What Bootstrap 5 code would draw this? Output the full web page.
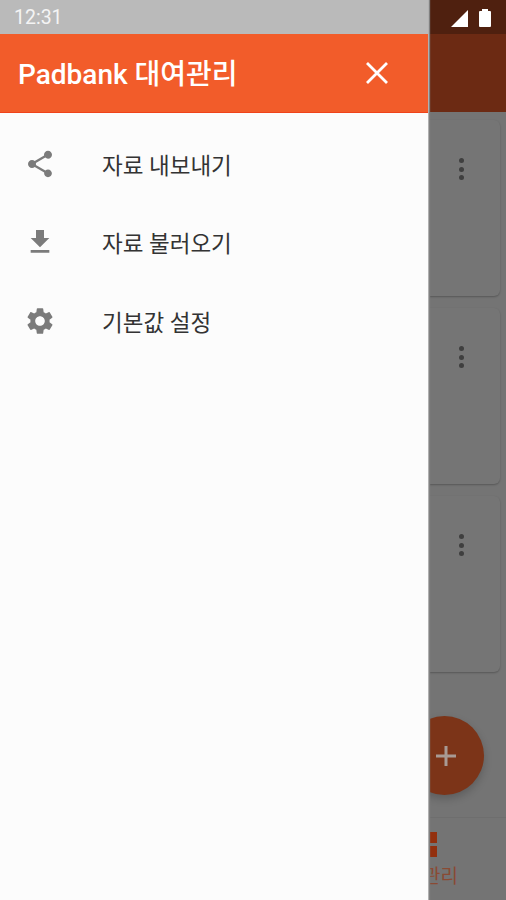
<!DOCTYPE html>
<html lang="ko">
<head>
    <meta charset="UTF-8">
    <meta name="viewport" content="width=device-width, initial-scale=1.0">
    <title>Padbank 대여관리</title>
    <link rel="stylesheet" href="https://cdn.jsdelivr.net/npm/bootstrap@5.3.0/dist/css/bootstrap.min.css">
    <style>
        html, body { margin: 0; height: 900px; overflow: hidden; }
        body { font-family: Roboto, "Noto Sans CJK KR", sans-serif; background: #747474; }
        .phone { width: 506px; height: 900px; }

        /* app behind the drawer, already dimmed */
        .app-status { height: 34px; background: #4f200f; padding: 2px 14px 0 0; }
        .app-bar { height: 78px; background: #6c2a13; }
        .app-body { background: #747474; padding: 8px 6px 0 8px; height: 705px; }
        .item-box { height: 176px; background: #757575; border-radius: 6px; box-shadow: 0 1px 2px rgba(0,0,0,.25); padding-top: 38px; margin-bottom: 12px; }
        .dots { width: 48px; margin-left: auto; margin-right: 15px; gap: 3.5px; }
        .dots i { width: 5px; height: 5px; border-radius: 50%; background: #3f3f3f; display: block; }
        .fab { position: absolute; left: 405px; top: 716px; width: 79px; height: 79px; border-radius: 50%; background: #7c3418; box-shadow: 0 4px 8px rgba(0,0,0,.2); padding-left: 2px; }
        .app-nav { height: 83px; background: #747474; border-top: 1px solid #6e6e6e; }
        .nav-glyph { position: absolute; left: 428px; top: 832px; width: 9px; gap: 3px; }
        .nav-glyph i { display: block; height: 11px; background: #93300e; }
        .nav-label { position: absolute; left: 340px; width: 118px; top: 864px; font-size: 19px; line-height: 26px; color: #8a4a33; text-align: right; }

        /* drawer */
        .drawer { position: absolute; left: 0; top: 0; width: 428px; height: 900px; background: #fcfcfc; box-shadow: 1px 0 0 #b0b0b0, 2px 0 1px #808080; }
        .drawer-status { height: 34px; background: #bababa; color: #f4f4f4; font-size: 19.5px; padding-left: 14px; padding-top: 2px; }
        .drawer-head { height: 79px; background: #f25c2a; border-bottom: 1px solid #f0431a; padding: 0 39px 0 18px; color: #fff; }
        .drawer-title { font-size: 28px; font-weight: 500; line-height: 34px; padding-top: 4px; height: 38px; }
        .menu-list { padding-top: 13px; }
        .menu-row { height: 78.5px; padding-left: 24px; color: #333; font-size: 22.5px; }
        .menu-row span { padding-top: 3px; }
        .menu-row svg { width: 32px; height: 32px; fill: #7b7b7b; flex: none; margin: 0 46px 3px 0; }
    </style>
</head>
<body>
    <div class="phone position-relative">
        <!-- app behind -->
        <div class="app-status d-flex align-items-center justify-content-end gap-2">
            <svg width="20" height="20" viewBox="0 0 20 20"><path d="M1 19 L18 2 V19 Z" fill="#fff"/></svg>
            <svg width="14" height="20" viewBox="0 0 14 20"><path d="M4 3V1h6v2h2a1 1 0 0 1 1 1v14a1 1 0 0 1-1 1H2a1 1 0 0 1-1-1V4a1 1 0 0 1 1-1z" fill="#fff"/></svg>
        </div>
        <div class="app-bar"></div>
        <div class="app-body">
            <div class="item-box"><div class="dots d-flex flex-column align-items-center"><i></i><i></i><i></i></div></div>
            <div class="item-box"><div class="dots d-flex flex-column align-items-center"><i></i><i></i><i></i></div></div>
            <div class="item-box"><div class="dots d-flex flex-column align-items-center"><i></i><i></i><i></i></div></div>
        </div>
        <div class="app-nav"></div>
        <div class="fab d-flex align-items-center justify-content-center">
            <svg width="24" height="24" viewBox="0 0 24 24"><path d="M10.5 2h3v8.500h8.500v3h-8.500v8.500h-3v-8.500H2v-3h8.500z" fill="#a89a94"/></svg>
        </div>
        <div class="nav-glyph d-flex flex-column"><i></i><i></i></div>
        <div class="nav-label">대여관리</div>

        <!-- drawer -->
        <div class="drawer">
            <div class="drawer-status d-flex align-items-center">12:31</div>
            <div class="drawer-head d-flex align-items-center justify-content-between">
                <div class="drawer-title">Padbank 대여관리</div>
                <svg width="24" height="24" viewBox="0 0 24 24"><path d="M2 2 L22 22 M22 2 L2 22" stroke="#fff" stroke-width="2.8" fill="none"/></svg>
            </div>
            <div class="menu-list">
                <div class="menu-row d-flex align-items-center">
                    <svg viewBox="0 0 24 24"><path d="M18 16.08c-.76 0-1.44.3-1.96.77L8.91 12.7c.05-.23.09-.46.09-.7s-.04-.47-.09-.7l7.05-4.11c.54.5 1.25.81 2.04.81 1.66 0 3-1.34 3-3s-1.34-3-3-3-3 1.34-3 3c0 .24.04.47.09.7L8.04 9.81C7.5 9.31 6.79 9 6 9c-1.66 0-3 1.34-3 3s1.34 3 3 3c.79 0 1.5-.31 2.04-.81l7.12 4.16c-.05.21-.08.43-.08.65 0 1.61 1.31 2.92 2.92 2.92s2.92-1.31 2.92-2.92-1.31-2.92-2.92-2.92z"/></svg>
                    <span>자료 내보내기</span>
                </div>
                <div class="menu-row d-flex align-items-center">
                    <svg viewBox="0 0 24 24"><path d="M19 9h-4V3H9v6H5l7 7 7-7zM5 18v2h14v-2H5z"/></svg>
                    <span>자료 불러오기</span>
                </div>
                <div class="menu-row d-flex align-items-center">
                    <svg viewBox="0 0 24 24"><path d="M19.14 12.94c.04-.3.06-.61.06-.94 0-.32-.02-.64-.07-.94l2.03-1.58a.49.49 0 0 0 .12-.61l-1.92-3.32a.488.488 0 0 0-.59-.22l-2.39.96c-.5-.38-1.03-.7-1.62-.94l-.36-2.54a.484.484 0 0 0-.48-.41h-3.84c-.24 0-.43.17-.47.41l-.36 2.54c-.59.24-1.13.57-1.62.94l-2.39-.96c-.22-.08-.47 0-.59.22L2.74 8.87c-.12.21-.08.47.12.61l2.03 1.58c-.05.3-.09.63-.09.94s.02.64.07.94l-2.03 1.58a.49.49 0 0 0-.12.61l1.92 3.32c.12.22.37.29.59.22l2.39-.96c.5.38 1.03.7 1.62.94l.36 2.54c.05.24.24.41.48.41h3.84c.24 0 .44-.17.47-.41l.36-2.54c.59-.24 1.13-.56 1.62-.94l2.39.96c.22.08.47 0 .59-.22l1.92-3.32c.12-.22.07-.47-.12-.61l-2.01-1.58zM12 15.6c-1.98 0-3.6-1.62-3.6-3.6s1.62-3.6 3.6-3.6 3.6 1.62 3.6 3.6-1.62 3.6-3.6 3.6z"/></svg>
                    <span>기본값 설정</span>
                </div>
            </div>
        </div>
    </div>
    <script src="https://cdn.jsdelivr.net/npm/bootstrap@5.3.0/dist/js/bootstrap.bundle.min.js"></script>
</body>
</html>
